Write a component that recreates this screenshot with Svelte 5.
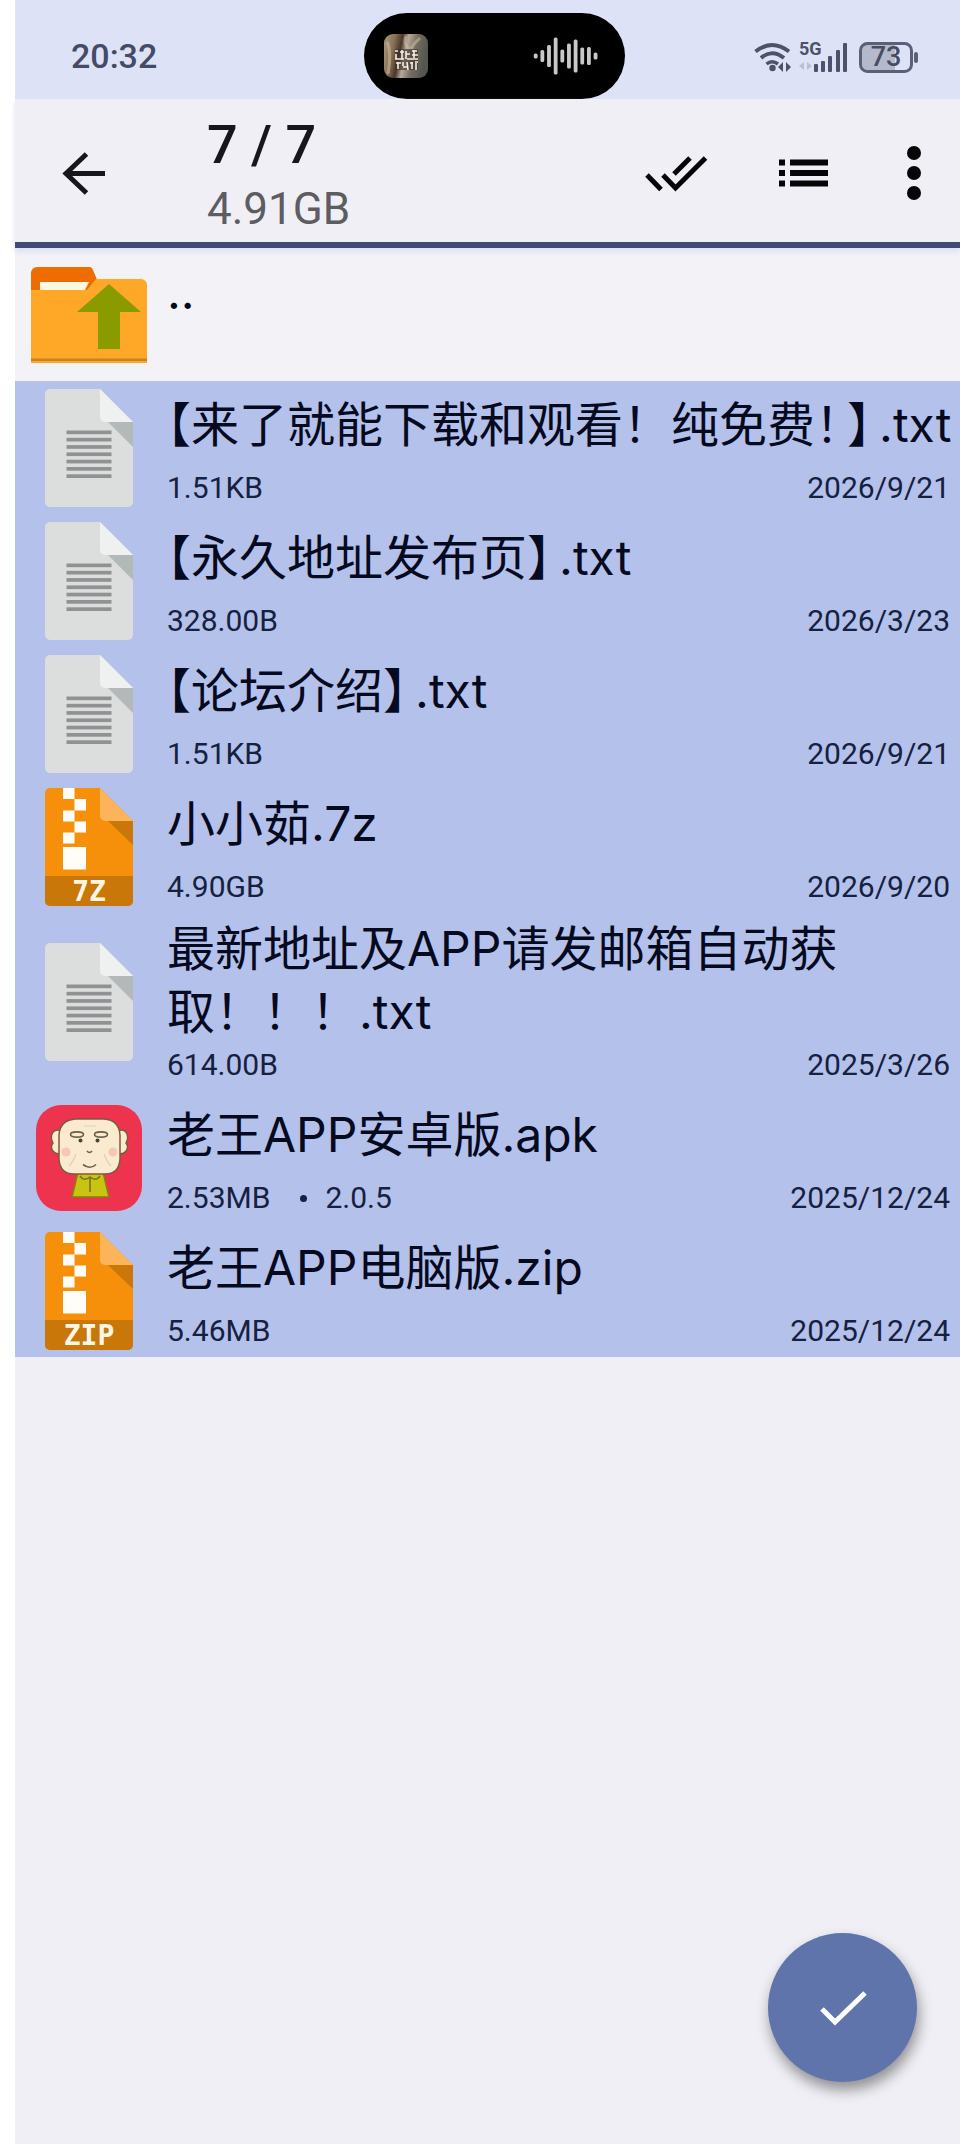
<script>
  const files = [
    { icon: 'txt', name: '【来了就能下载和观看！纯免费！】.txt', size: '1.51KB', date: '2026/9/21' },
    { icon: 'txt', name: '【永久地址发布页】.txt', size: '328.00B', date: '2026/3/23' },
    { icon: 'txt', name: '【论坛介绍】.txt', size: '1.51KB', date: '2026/9/21' },
    { icon: 'archive', label: '7Z', name: '小小茹.7z', size: '4.90GB', date: '2026/9/20' },
    { icon: 'txt', name: '最新地址及APP请发邮箱自动获取！！！.txt', size: '614.00B', date: '2025/3/26' },
    { icon: 'apk', name: '老王APP安卓版.apk', size: '2.53MB', version: '2.0.5', date: '2025/12/24' },
    { icon: 'archive', label: 'ZIP', name: '老王APP电脑版.zip', size: '5.46MB', date: '2025/12/24' }
  ];

  let selected = $state(files.map(() => true));
  const count = $derived(selected.filter(Boolean).length);

  const wave = [5, 12, 22, 37, 13, 25, 33, 17, 18, 7];

  // Brackets, and a mark directly before a closing bracket, are set half width.
  function split(name) {
    return name.split(/(【|！?】)/).filter(Boolean).flatMap((part) => {
      if (part === '【') return [{ text: part, kind: 'open' }];
      if (part.endsWith('】')) return [...part].map((text) => ({ text, kind: 'close' }));
      return [{ text: part, kind: '' }];
    });
  }
</script>

<div class="page">
  <div class="status">
    <time class="clock">20:32</time>
    <div class="island">
      <svg width="44" height="44" viewBox="0 0 44 44" aria-hidden="true">
        <defs>
          <linearGradient id="thumb" x1="0" x2="1" y1="0" y2="0.2">
            <stop offset="0" stop-color="#a99c7c" />
            <stop offset="0.25" stop-color="#8a7156" />
            <stop offset="0.42" stop-color="#4a352a" />
            <stop offset="0.55" stop-color="#b9a998" />
            <stop offset="0.75" stop-color="#776d60" />
            <stop offset="1" stop-color="#54574f" />
          </linearGradient>
        </defs>
        <rect width="44" height="44" rx="9" fill="url(#thumb)" />
        <path d="M3 8c4 8 3 20 1 32M22 2c-2 6-1 9 3 13M36 4c-4 4-7 6-9 11" stroke="#d2c4ac" stroke-width="3" fill="none" opacity=".5" />
        <rect x="11" y="15" width="23" height="21" fill="#3a3029" opacity=".6" />
        <path d="M11 17h3M12 20v5M16 18h4M18 16v9M22 17v8M22 20h4M28 17h5M30 16v8M28 21h6M11 25h9M23 25h11M12 29h5M14 28v7M19 28v4M19 33h4M23 28l1 8M26 29h3M28 28v7M31 28h3M32 29v7" stroke="#f4efe6" stroke-width="1.6" fill="none" />
      </svg>
      <svg width="66" height="40" viewBox="0 0 66 40" aria-hidden="true">
        {#each wave as h, i}
          <rect x={i * 6.65 + 0.8} y={20 - h / 2} width="3.8" height={h} rx="1.6" fill="#c9c9c9" />
        {/each}
      </svg>
    </div>
    <svg class="signals" width="168" height="38" viewBox="0 0 168 38" role="img" aria-label="Wi-Fi, 5G, 73%">
      <g fill="none" stroke="#4d526a" stroke-width="4">
        <path d="M5.500 14.500Q22 1.500 39 14.500" />
        <path d="M11 21Q22 11.500 34 21" />
        <path d="M16.500 27Q22 22.500 28 27" stroke-width="3.500" />
      </g>
      <circle cx="22.500" cy="31" r="3.200" fill="#4d526a" />
      <path d="M33 25v10l-5-5zM36 25v10l5-5z" fill="#4d526a" />
      <text x="49" y="18" class="net">5G</text>
      <path d="M54 25v8l-5-4zM57 25v8l5-4z" fill="#b9bfd4" />
      <g fill="#4d526a">
        <rect x="64" y="27" width="4" height="8" rx="1" />
        <rect x="71" y="24" width="4" height="11" rx="1" />
        <rect x="78" y="19" width="4" height="16" rx="1" />
        <rect x="86" y="13" width="4" height="22" rx="1" />
        <rect x="93" y="6" width="4" height="29" rx="1" />
      </g>
      <path d="M117 6h28v28h-28a6 6 0 0 1-6-6v-16a6 6 0 0 1 6-6z" fill="#b4b9cb" />
      <rect x="110.500" y="6.500" width="51" height="28" rx="7" fill="none" stroke="#5b6078" stroke-width="3" />
      <rect x="164" y="15" width="4" height="11" rx="2" fill="#5b6078" />
      <text x="136" y="29" text-anchor="middle" class="level">73</text>
    </svg>
  </div>

  <header class="bar">
    <button class="back" aria-label="返回">
      <svg width="48" height="48" viewBox="0 0 48 48" fill="none" stroke="#17171b" stroke-width="5" aria-hidden="true">
        <path d="M46 24.500H7M27.500 5L7 24.500L27.500 44" />
      </svg>
    </button>
    <div class="titles">
      <h1>{count} / {files.length}</h1>
      <p>4.91GB</p>
    </div>
    <button class="tool" aria-label="全选">
      <svg width="64" height="40" viewBox="0 0 64 40" fill="none" stroke="#060608" stroke-width="5" aria-hidden="true">
        <path d="M3 22L17 36.500M19 22L31.500 35L61.500 5M30 21L46 5" />
      </svg>
    </button>
    <button class="tool" aria-label="列表视图">
      <svg width="50" height="30" viewBox="0 0 50 30" fill="#060608" aria-hidden="true">
        <path d="M0 1.500h6v6H0zM0 12h6v6H0zM0 22.500h6v6H0zM11 1.500h38v6H11zM11 12h38v6H11zM11 22.500h38v6H11z" />
      </svg>
    </button>
    <button class="tool more" aria-label="更多">
      <svg width="16" height="56" viewBox="0 0 16 56" fill="#060608" aria-hidden="true">
        <circle cx="8" cy="8" r="7" /><circle cx="8" cy="28" r="7" /><circle cx="8" cy="48" r="7" />
      </svg>
    </button>
  </header>

  <main>
    <ul>
      <li>
        <button class="row parent" aria-label="上级目录">
          <svg class="icon" viewBox="0 0 118 118" aria-hidden="true">
            <path d="M1 34V17a6 6 0 0 1 6-6h52q3 0 4 3l5 12v10H1z" fill="#ef6c00" />
            <path d="M1 34h56l9-11h45a6 6 0 0 1 6 6v78H1z" fill="#ffa726" />
            <path d="M10 26h49l-4 8H10z" fill="#fff8e1" />
            <path d="M1 102.500h116v2.500H1z" fill="#c98325" />
            <path d="M79 28L111 56H90V93H68V56H47z" fill="#8a9b00" />
          </svg>
          <span class="text"><span class="name">..</span></span>
        </button>
      </li>
      {#each files as file, i}
        <li>
          <button class="row" class:selected={selected[i]} aria-pressed={selected[i]} onclick={() => (selected[i] = !selected[i])}>
            <svg class="icon" viewBox="0 0 118 118" aria-hidden="true">
              {#if file.icon === 'txt'}
                <path d="M20 0H70L103 33V113a5 5 0 0 1-5 5H20a5 5 0 0 1-5-5V5a5 5 0 0 1 5-5z" fill="#dcdedd" />
                <path d="M70 0L103 33H75a5 5 0 0 1-5-5z" fill="#eff1f1" />
                <path d="M78 33H103V58z" fill="#b3b8b8" />
                {#each [41.5, 48.8, 56.1, 63.4, 70.7, 78, 85.3] as y}
                  <rect x="36.500" {y} width="45" height="3.700" fill="#8f9192" />
                {/each}
              {:else if file.icon === 'archive'}
                <path d="M20 0H70L103 33V113a5 5 0 0 1-5 5H20a5 5 0 0 1-5-5V5a5 5 0 0 1 5-5z" fill="#f6900a" />
                <path d="M15 88H103V113a5 5 0 0 1-5 5H20a5 5 0 0 1-5-5z" fill="#c87708" />
                <path d="M70 0L103 33H75a5 5 0 0 1-5-5z" fill="#fcb45a" />
                <path d="M78 33H103V57z" fill="#c87708" />
                <path d="M33 0h11.500v11H33zM44.500 11h11.500v11.500H44.500zM33 22.500h11.500v11H33zM44.500 33.500h11.500v11H44.500zM33 44.500h11.500v11H33zM33 59h23v22.500H33z" fill="#fffdf8" />
                <text x="59" y="113" text-anchor="middle" class="ext">{file.label}</text>
              {:else}
                <rect x="6" y="6" width="106" height="106" rx="25" fill="#ee334e" />
                <g fill="#f9ead0" stroke="#7d5a3a" stroke-width="1.500">
                  <path d="M31 32C23 28 19 37 23 44C19 49 24 57 31 54z" />
                  <path d="M88 32C96 28 100 37 96 44C100 49 95 57 88 54z" />
                  <path d="M48 73L42 98H79L73 73z" fill="#c9c412" stroke="#8c7a16" />
                  <path d="M46 20H74Q89 21 90 36V60Q89 75 75 75H44Q30 75 29 60V36Q30 21 46 20z" />
                </g>
                <g fill="none" stroke="#6b6048" stroke-width="1.600">
                  <ellipse cx="47" cy="35.500" rx="6.500" ry="2.600" />
                  <ellipse cx="71" cy="35.500" rx="6.500" ry="2.600" />
                  <path d="M53 65.500Q60 71 66 65.500" />
                  <path d="M57 52q2.500 3 5 0" />
                  <path d="M50 77q4 6 10 1q6 5 10-1M60 79v14" stroke="#77751a" />
                </g>
                <path d="M46 55q-3 8-7 12M74 55q3 8 7 12M54 27h12" fill="none" stroke="#dfcfb8" stroke-width="1.200" />
                <circle cx="50.500" cy="41.500" r="2" fill="#4a4335" /><circle cx="67.500" cy="41.500" r="2" fill="#4a4335" />
                <circle cx="36" cy="53" r="4.500" fill="#f3bfae" opacity=".8" /><circle cx="83" cy="53" r="4.500" fill="#f3bfae" opacity=".8" />
              {/if}
            </svg>
            <span class="text">
              <span class="name"><span>{#each split(file.name) as part}{#if part.kind}<span class={part.kind}>{part.text}</span>{:else}{part.text}{/if}{/each}</span></span>
              <span class="meta">
                <span>{file.size}</span>
                {#if file.version}<span class="version"><i></i>{file.version}</span>{/if}
                <time>{file.date}</time>
              </span>
            </span>
          </button>
        </li>
      {/each}
    </ul>
  </main>

  <button class="fab" aria-label="确定">
    <svg width="48" height="38" viewBox="0 0 48 38" fill="none" stroke="#fff" stroke-width="5" aria-hidden="true">
      <path d="M3 20L16 33L46 4" />
    </svg>
  </button>
</div>

<style>
  :global(body) {
    margin: 0;
    background: #fff;
  }
  .page {
    box-sizing: border-box;
    min-height: 100vh;
    margin-left: 15px;
    background: #f0eff5;
    color: #060a1e;
    font-family: Roboto, "Noto Sans CJK SC", sans-serif;
  }
  button {
    border: 0;
    padding: 0;
    background: none;
    color: inherit;
    font: inherit;
    cursor: pointer;
  }
  svg {
    display: block;
    flex: none;
    overflow: visible;
  }
  .status {
    display: grid;
    grid-template-columns: 1fr auto 1fr;
    align-items: center;
    padding: 13px 42px 0 56px;
    background: #dee2f6;
  }
  .clock {
    color: #454a66;
    font-size: 34px;
    font-weight: 500;
    line-height: 40px;
  }
  .island {
    display: flex;
    align-items: center;
    justify-content: space-between;
    box-sizing: border-box;
    width: 261px;
    height: 86px;
    padding: 0 26px 0 20px;
    border-radius: 43px;
    background: #000;
  }
  .signals {
    justify-self: end;
  }
  .net {
    fill: #4d526a;
    font-size: 18px;
    font-weight: 700;
  }
  .level {
    fill: #474c64;
    font-size: 27px;
    font-weight: 500;
  }
  .bar {
    position: relative;
    display: flex;
    align-items: center;
    padding: 6px 0 1px 44px;
    border-bottom: 6px solid #424974;
    box-shadow: 0 4px 5px #dde2f6;
  }
  .titles {
    flex: 1;
    padding: 8px 0 0 100px;
  }
  h1 {
    margin: 0;
    color: #17171b;
    font-size: 54px;
    font-weight: 500;
    line-height: 64px;
  }
  p {
    margin: 0;
    color: #5c5c61;
    font-size: 44px;
    line-height: 64px;
  }
  .tool {
    display: flex;
    align-items: center;
    justify-content: center;
    width: 128px;
    height: 96px;
  }
  .more {
    width: 92px;
  }
  ul {
    margin: 0;
    padding: 0;
    list-style: none;
  }
  .row {
    display: flex;
    align-items: center;
    gap: 19px;
    width: 100%;
    min-height: 133px;
    padding: 4px 0 4px 15px;
    text-align: left;
  }
  .parent {
    background: #f3f2f7;
  }
  .selected {
    background: #b4c1eb;
  }
  .icon {
    width: 118px;
    height: 118px;
  }
  .ext {
    fill: #fff6e6;
    font-family: "DejaVu Sans Mono", monospace;
    font-size: 28px;
    font-weight: 700;
  }
  .text {
    display: flex;
    flex: 1;
    flex-direction: column;
    align-self: stretch;
    min-width: 0;
  }
  .name {
    display: flex;
    align-items: center;
    min-height: 79px;
    font-family: Inter, "Noto Sans CJK SC", sans-serif;
    font-size: 48px;
    line-height: 63px;
  }
  .open,
  .close {
    font-feature-settings: "halt";
  }
  .close {
    margin-right: 8px;
  }
  .meta {
    display: flex;
    align-items: center;
    margin-top: auto;
    padding-right: 10px;
    color: #16203f;
    font-size: 30px;
    line-height: 44px;
  }
  .version {
    display: flex;
    align-items: center;
    gap: 18px;
    margin-left: 30px;
  }
  .version i {
    width: 7px;
    height: 7px;
    border-radius: 50%;
    background: #16203f;
  }
  .meta time {
    margin-left: auto;
  }
  .fab {
    position: fixed;
    right: 43px;
    bottom: 62px;
    display: flex;
    align-items: center;
    justify-content: center;
    width: 149px;
    height: 149px;
    border-radius: 50%;
    background: #6074ac;
    box-shadow: 2px 8px 14px rgba(0, 0, 0, 0.4);
  }
</style>
